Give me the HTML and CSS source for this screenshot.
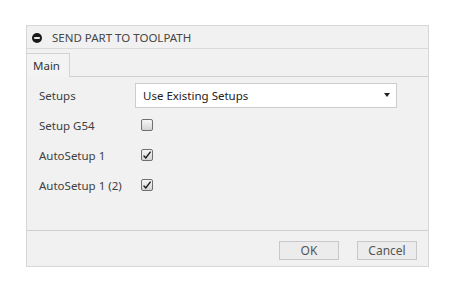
FILE: index.html
```html
<!DOCTYPE html>
<html lang="en">
  <head>
    <meta charset="utf-8" />
    <title>Send Part to Toolpath</title>
    <link rel="stylesheet" href="styles.css">
  </head>
  <body>
    <div class="dialog">
      <!--Title-->
      <div class="dialog-title">
        <svg class="collapse-icon" width="10" height="10" viewBox="0 0 10 10">
          <circle cx="5" cy="5" r="5" fill="#1a1a1a"></circle>
          <rect x="2.2" y="4.1" width="5.6" height="1.8" fill="#ffffff"></rect>
        </svg>
        <span>SEND PART TO TOOLPATH</span>
      </div>
      <!--Tabs-->
      <div class="tab-bar">
        <div class="tab tab-active">Main</div>
        <div class="tab-fill"></div>
      </div>
      <!--Body-->
      <div class="dialog-body">
        <div class="field-label">Setups</div>
        <div class="select">
          <span>Use Existing Setups</span>
          <span class="select-arrow"></span>
        </div>

        <div class="field-label">Setup G54</div>
        <div class="field-control"><span class="checkbox"></span></div>

        <div class="field-label">AutoSetup 1</div>
        <div class="field-control">
          <span class="checkbox">
            <svg width="10" height="10" viewBox="0 0 10 10">
              <path d="M1.6 5.6 L3.8 8 L8.6 1.6" fill="none" stroke="#111" stroke-width="1.3"></path>
            </svg>
          </span>
        </div>

        <div class="field-label">AutoSetup 1 (2)</div>
        <div class="field-control">
          <span class="checkbox">
            <svg width="10" height="10" viewBox="0 0 10 10">
              <path d="M1.6 5.6 L3.8 8 L8.6 1.6" fill="none" stroke="#111" stroke-width="1.3"></path>
            </svg>
          </span>
        </div>
      </div>
      <!--Footer-->
      <div class="dialog-footer">
        <button class="btn" type="button">OK</button>
        <button class="btn" type="button">Cancel</button>
      </div>
    </div>
  </body>
</html>
```

FILE: styles.css
```css
body {
  margin: 0;
  background: #ffffff;
  font-family: "Noto Sans", "DejaVu Sans", sans-serif;
  font-size: 11.5px;
  color: #3f3f3f;
}
.dialog {
  margin: 25px 0 0 26px;
  width: 401px;
  height: 240px;
  border: 1px solid #d6d6d6;
  background: #f1f1f1;
  display: flex;
  flex-direction: column;
}
.dialog-title {
  height: 22px;
  border-bottom: 1px solid #d9d9d9;
  display: flex;
  align-items: center;
  padding-left: 5px;
  font-size: 11.5px;
  color: #474747;
}
.collapse-icon {
  margin-right: 10px;
  margin-top: 1px;
}
.tab-bar {
  height: 28px;
  display: flex;
  align-items: flex-end;
}
.tab {
  height: 23px;
  line-height: 23px;
  padding: 0 9px 0 6px;
  border: 1px solid #d2d2d2;
  border-bottom: none;
  border-left: none;
  background: #f3f3f3;
  color: #333;
}
.tab-fill {
  flex: 1;
  border-bottom: 1px solid #cfcfcf;
}
.dialog-body {
  flex: 1;
  display: grid;
  grid-template-columns: 96px 262px;
  grid-auto-rows: 30px;
  align-items: center;
  padding: 3px 0 0 12px;
  border-bottom: 1px solid #d0d0d0;
}
.dialog-body .select {
  height: 25px;
}
.field-label {
  color: #404040;
}
.select {
  box-sizing: border-box;
  border: 1px solid #cdcdcd;
  background: #ffffff;
  display: flex;
  align-items: center;
  justify-content: space-between;
  padding: 0 6px 0 7px;
  color: #222;
}
.select-arrow {
  width: 0;
  height: 0;
  border-left: 3.5px solid transparent;
  border-right: 3.5px solid transparent;
  border-top: 4px solid #222;
}
.field-control {
  display: flex;
  padding-left: 6px;
}
.checkbox {
  box-sizing: border-box;
  width: 12px;
  height: 12px;
  border: 1px solid #707070;
  border-radius: 2px;
  background: linear-gradient(#f6f6f6, #d4d4d4);
  display: flex;
  align-items: center;
  justify-content: center;
}
.dialog-footer {
  height: 35px;
  display: flex;
  justify-content: flex-end;
  align-items: flex-start;
  gap: 18px;
  padding: 10px 11px 0 0;
  box-sizing: border-box;
}
.btn {
  width: 60px;
  height: 19px;
  border: 1px solid #c8c8c8;
  background: #ececec;
  font-family: "Noto Sans", "DejaVu Sans", sans-serif;
  font-size: 12px;
  color: #555;
  padding: 0;
}
```
